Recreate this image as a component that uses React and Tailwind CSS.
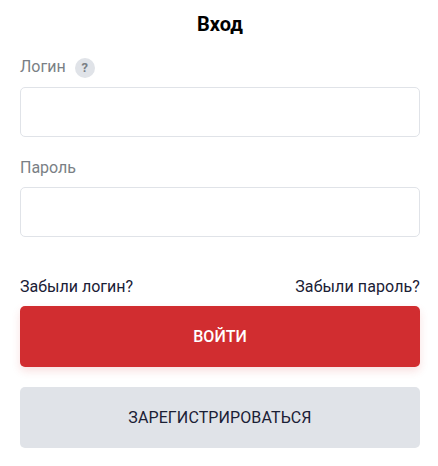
export default function App() {
  return (
    <div className="w-[438px] h-[466px] bg-white pl-5 font-['Roboto',sans-serif]">
      <div className="w-[400px]">
        <h1 className="pt-[13px] text-center text-[20px] leading-[23px] font-bold text-black">Вход</h1>
        <div className="mt-[19px] flex items-center h-[24px]">
          <span className="text-[16px] leading-[24px] text-[#7a7f85]">Логин</span>
          <span className="ml-[9px] mt-[1px] w-[20px] h-[20px] rounded-full bg-[#e0e3e8] flex items-center justify-center text-[13px] font-bold text-[#7a7f85]">?</span>
        </div>
        <input className="mt-[8px] block w-full h-[50px] rounded-[5px] border border-[#e0e3e8] bg-white" />
        <div className="mt-[19px] h-[24px] text-[16px] leading-[24px] text-[#7a7f85]">Пароль</div>
        <input className="mt-[7px] block w-full h-[50px] rounded-[5px] border border-[#e0e3e8] bg-white" />
        <div className="mt-[40px] flex justify-between text-[16px] leading-[20px] font-normal text-[#1a2035]">
          <span>Забыли логин?</span>
          <span className="tracking-[0.1px]">Забыли пароль?</span>
        </div>
        <button className="mt-[9px] block w-full h-[61px] rounded-[5px] bg-[#d12d30] text-white text-[16px] font-medium shadow-[0_4px_8px_rgba(209,45,48,0.15)]">ВОЙТИ</button>
        <button className="mt-[20px] block w-full h-[61px] rounded-[5px] bg-[#e0e3e8] text-[#1a2035] text-[16px] font-normal tracking-[0.1px]">ЗАРЕГИСТРИРОВАТЬСЯ</button>
      </div>
    </div>
  );
}
